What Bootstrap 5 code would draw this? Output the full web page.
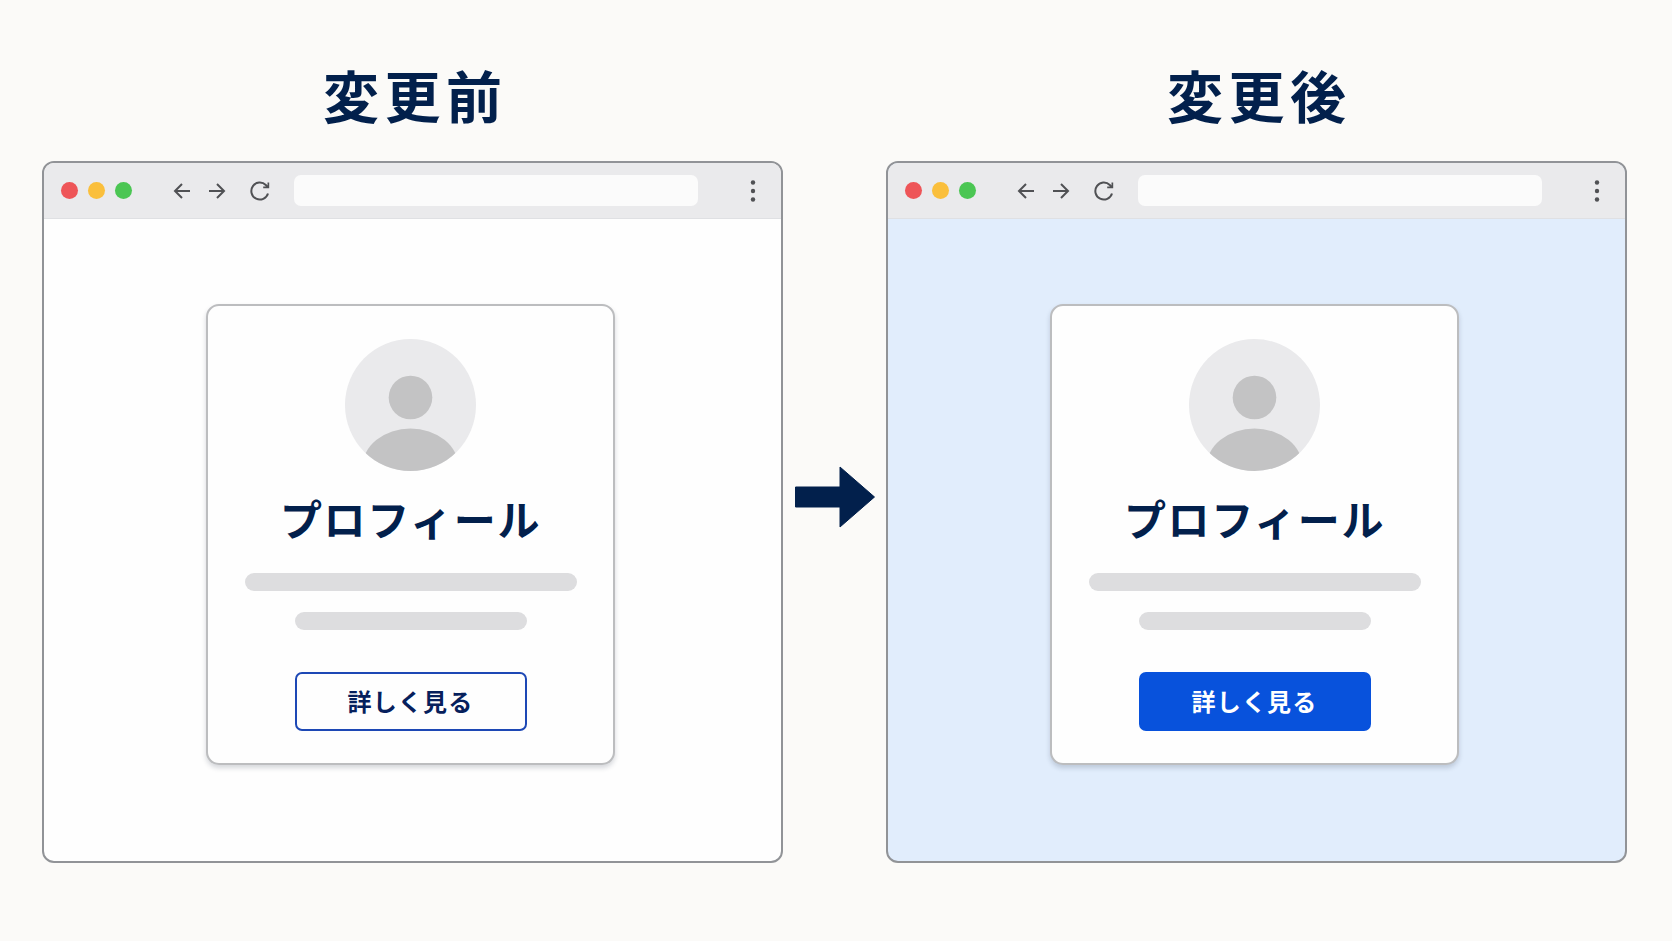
<!DOCTYPE html>
<html lang="ja">
<head>
<meta charset="utf-8">
<meta name="viewport" content="width=device-width, initial-scale=1">
<title>変更前 / 変更後</title>
<link href="https://cdn.jsdelivr.net/npm/bootstrap@5.3.0/dist/css/bootstrap.min.css" rel="stylesheet">
<style>
  :root { --navy: #02204c; --chrome: #eaeaec; --line: #919397; }
  body { background: #fbfaf8; color: var(--navy); font-family: "Noto Sans CJK JP", sans-serif; }
  .compare { padding: 53px 45px 56px 42px; }
  .state-title { font-size: 56px; line-height: 82px; letter-spacing: .1em; padding-left: .1em; margin-bottom: 26px; }
  .arrow-col { width: 103px; padding-top: 78px; }
  .browser { border: 2px solid var(--line); border-radius: 12px; background: #fefefe; }
  .browser.after { background: #e1edfc; }
  .toolbar { background: var(--chrome); border-bottom: 1px solid #dfe0e3; padding: 12px 18px 12px 17px; }
  .lights { gap: 10px; }
  .light { width: 17px; height: 17px; }
  .red { background: #ee5558; }
  .yellow { background: #fabf3c; }
  .green { background: #4bc653; }
  .tool { width: 20px; height: 20px; line-height: 0; color: #505154; }
  .history { gap: 15px; margin-left: 40px; }
  .reload { margin-left: 23px; }
  .address { height: 31px; margin: 0 45px 0 24px; border: 0; border-radius: 7px; background: #fbfbfb; }
  .viewport { padding: 85px 4px 96px 0; }
  .profile { max-width: 409px; padding: 33px 32px 32px; border: 2px solid #bcbdbf; border-radius: 13px; background: #fefefe; box-shadow: 0 3px 5px rgba(30, 40, 60, .18); }
  .profile-name { font-size: 42px; line-height: 60px; letter-spacing: .04em; margin: 17px 0 25px; }
  .line { height: 18px; background: #dddddf; }
  .line-long { width: 332px; max-width: 100%; margin-bottom: 21px; }
  .line-short { width: 232px; margin-bottom: 42px; }
  .more { width: 232px; height: 59px; padding: 0 0 2px; border-width: 2px; border-radius: 7px; font-size: 24px; line-height: 30px; font-weight: 700; letter-spacing: .05em;
    --bs-btn-color: #06205c; --bs-btn-bg: #fefefe; --bs-btn-border-color: #1d48b5; }
  .after .more { --bs-btn-color: #fff; --bs-btn-bg: #0852dc; --bs-btn-border-color: #0852dc; }
</style>
</head>
<body>
<svg class="d-none" aria-hidden="true">
  <symbol id="back" viewBox="0 0 20 20"><path d="M18 10H3M10 3 3 10l7 7" fill="none" stroke="currentColor" stroke-width="2"/></symbol>
  <symbol id="forward" viewBox="0 0 20 20"><path d="M2 10h15M10 3l7 7-7 7" fill="none" stroke="currentColor" stroke-width="2"/></symbol>
  <symbol id="reload" viewBox="0 0 20 20"><path d="M18 12.500A8.500 8.500 0 1 1 15.800 4l1.700 1.800" fill="none" stroke="currentColor" stroke-width="2"/><path d="M17.500 1.500h1.700v5.700h-6V5.500h2.300l2-1z" fill="currentColor"/></symbol>
  <symbol id="menu" viewBox="0 0 20 22"><g fill="currentColor"><circle cx="10" cy="2.500" r="2.200"/><circle cx="10" cy="11" r="2.200"/><circle cx="10" cy="19.500" r="2.200"/></g></symbol>
  <symbol id="avatar" viewBox="0 0 131 132">
    <circle cx="65.500" cy="58.500" r="21.800" fill="#c3c3c4"/><ellipse cx="65.500" cy="128" rx="48" ry="38.500" fill="#c3c3c4"/>
  </symbol>
</svg>

<main class="compare d-flex">
  <section class="flex-fill text-center" aria-labelledby="before-title">
    <h1 class="state-title fw-bold" id="before-title">変更前</h1>
    <div class="browser overflow-hidden">
      <div class="toolbar d-flex align-items-center">
        <div class="lights d-flex"><span class="light red rounded-circle"></span><span class="light yellow rounded-circle"></span><span class="light green rounded-circle"></span></div>
        <div class="history d-flex">
          <button class="tool btn p-0 border-0" type="button" aria-label="戻る"><svg width="20" height="20"><use href="#back"/></svg></button>
          <button class="tool btn p-0 border-0" type="button" aria-label="進む"><svg width="20" height="20"><use href="#forward"/></svg></button>
        </div>
        <button class="tool reload btn p-0 border-0" type="button" aria-label="再読み込み"><svg width="20" height="20"><use href="#reload"/></svg></button>
        <input class="address flex-fill" type="text" aria-label="アドレス">
        <button class="tool h-auto btn p-0 border-0" type="button" aria-label="メニュー"><svg width="20" height="22"><use href="#menu"/></svg></button>
      </div>
      <div class="viewport d-flex justify-content-center">
        <article class="profile w-100 d-flex flex-column align-items-center">
          <svg class="rounded-circle" style="background:var(--chrome)" width="131" height="132" aria-hidden="true"><use href="#avatar"/></svg>
          <h2 class="profile-name fw-bold">プロフィール</h2>
          <div class="line line-long rounded-pill"></div>
          <div class="line line-short rounded-pill"></div>
          <button class="more btn" type="button">詳しく見る</button>
        </article>
      </div>
    </div>
  </section>

  <div class="arrow-col d-flex flex-shrink-0 align-items-center justify-content-center">
    <svg width="80" height="62" viewBox="0 0 80 62" aria-hidden="true"><path fill="#02204c" stroke="#02204c" stroke-linejoin="round" d="M.5 21H45V1l34.500 30L45 61V41H.5z"/></svg>
  </div>

  <section class="flex-fill text-center" aria-labelledby="after-title">
    <h1 class="state-title fw-bold" id="after-title">変更後</h1>
    <div class="browser after overflow-hidden">
      <div class="toolbar d-flex align-items-center">
        <div class="lights d-flex"><span class="light red rounded-circle"></span><span class="light yellow rounded-circle"></span><span class="light green rounded-circle"></span></div>
        <div class="history d-flex">
          <button class="tool btn p-0 border-0" type="button" aria-label="戻る"><svg width="20" height="20"><use href="#back"/></svg></button>
          <button class="tool btn p-0 border-0" type="button" aria-label="進む"><svg width="20" height="20"><use href="#forward"/></svg></button>
        </div>
        <button class="tool reload btn p-0 border-0" type="button" aria-label="再読み込み"><svg width="20" height="20"><use href="#reload"/></svg></button>
        <input class="address flex-fill" type="text" aria-label="アドレス">
        <button class="tool h-auto btn p-0 border-0" type="button" aria-label="メニュー"><svg width="20" height="22"><use href="#menu"/></svg></button>
      </div>
      <div class="viewport d-flex justify-content-center">
        <article class="profile w-100 d-flex flex-column align-items-center">
          <svg class="rounded-circle" style="background:var(--chrome)" width="131" height="132" aria-hidden="true"><use href="#avatar"/></svg>
          <h2 class="profile-name fw-bold">プロフィール</h2>
          <div class="line line-long rounded-pill"></div>
          <div class="line line-short rounded-pill"></div>
          <button class="more btn" type="button">詳しく見る</button>
        </article>
      </div>
    </div>
  </section>
</main>
<script src="https://cdn.jsdelivr.net/npm/bootstrap@5.3.0/dist/js/bootstrap.bundle.min.js"></script>
</body>
</html>
